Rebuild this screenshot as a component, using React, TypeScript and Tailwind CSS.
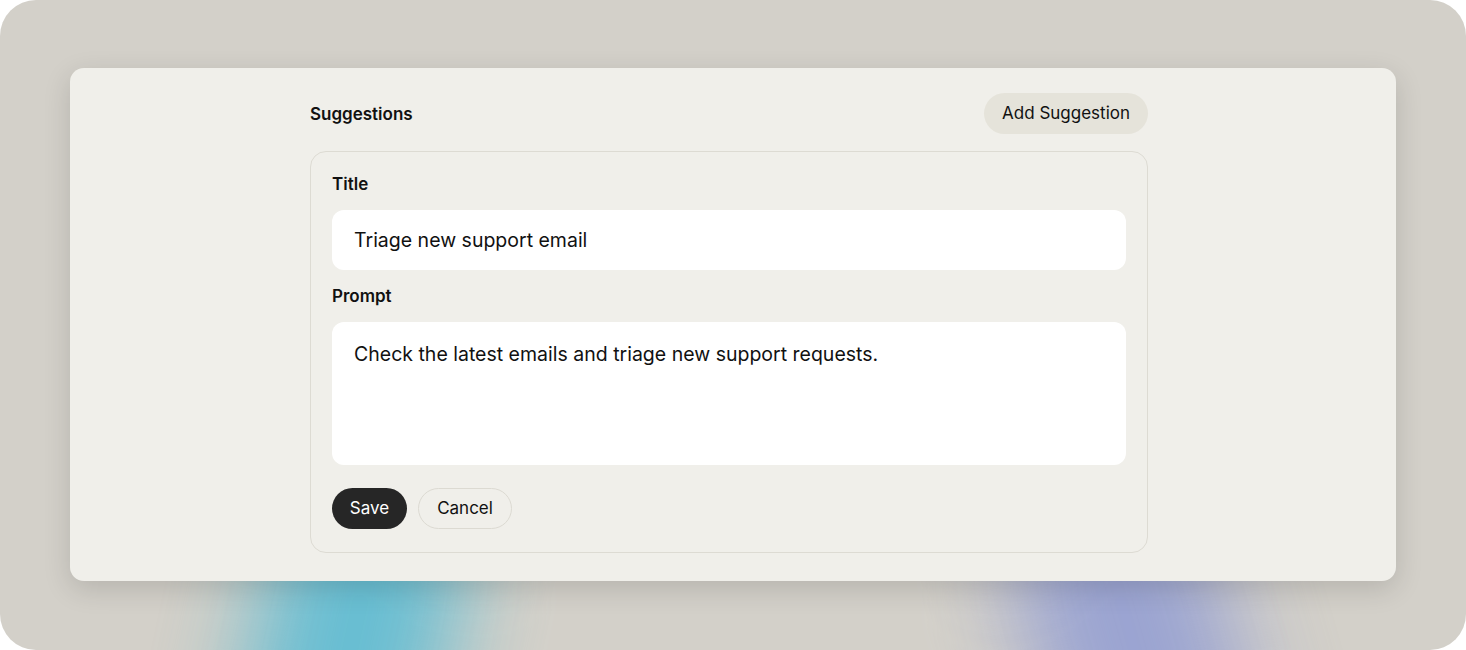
const font = { fontFamily: "Inter, 'Noto Sans', sans-serif" };

export default function App() {
  return (
    <div className="w-[1466px] h-[650px] bg-white" style={font}>
      <div className="relative h-full w-full overflow-hidden rounded-[36px] bg-[#d3d0c9] px-[70px] pt-[68px]">
        {/* colour glow under the card */}
        <div className="absolute left-[255px] top-[460px] h-[380px] w-[190px] rotate-[12deg] rounded-full bg-[#62bdd3] opacity-95 blur-[45px]" />
        <div className="absolute left-[1035px] top-[460px] h-[380px] w-[200px] -rotate-[16deg] rounded-full bg-[#98a2d2] opacity-95 blur-[45px]" />

        <div className="relative h-[513px] rounded-[14px] bg-[#f0efea] pt-[25px] shadow-[0_8px_28px_rgba(0,0,0,0.14)]">
          <div className="ml-[240px] w-[838px]">
            <div className="flex h-[41px] items-center justify-between">
              <h2 className="pt-[2px] text-[17px] font-semibold text-[#111]">Suggestions</h2>
              <button className="h-[41px] rounded-full bg-[#e5e3da] px-[18px] text-[17px] text-[#111]">
                Add Suggestion
              </button>
            </div>

            <div className="mt-[17px] rounded-[16px] border border-[#dddbd3] px-[21px] pt-[20px] pb-[23px]">
              <label className="block h-[24px] text-[17px] font-semibold leading-[24px] text-[#111]">Title</label>
              <div className="mt-[14px] flex h-[60px] items-center rounded-[12px] bg-white px-[22px] pt-[2px] text-[19.5px] text-[#111]">
                Triage new support email
              </div>
              <label className="mt-[14px] block h-[24px] text-[17px] font-semibold leading-[24px] text-[#111]">Prompt</label>
              <div className="mt-[14px] h-[143px] rounded-[12px] bg-white px-[22px] pt-[19px] text-[19.5px] leading-[26px] text-[#111]">
                Check the latest emails and triage new support requests.
              </div>
              <div className="mt-[23px] flex gap-[11px]">
                <button className="h-[41px] w-[75px] rounded-full bg-[#262626] text-[17px] text-white">Save</button>
                <button className="h-[41px] w-[94px] rounded-full border border-[#dcdad2] text-[17px] text-[#111]">
                  Cancel
                </button>
              </div>
            </div>
          </div>
        </div>
      </div>
    </div>
  );
}
